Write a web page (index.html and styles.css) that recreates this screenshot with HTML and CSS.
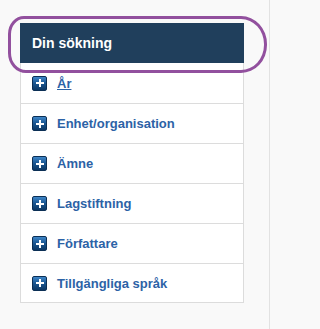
FILE: index.html
```html
<!DOCTYPE html>
<html lang="sv">
<head>
<meta charset="utf-8">
<title>Din sökning</title>
<link rel="stylesheet" href="styles.css">
</head>
<body>
<div class="page">
  <aside class="panel">
    <h2 class="panel-head">Din sökning</h2>
    <ul class="facets">
      <li class="facet"><span class="plus"></span><a class="facet-link active" href="#">År</a></li>
      <li class="facet"><span class="plus"></span><a class="facet-link" href="#">Enhet/organisation</a></li>
      <li class="facet"><span class="plus"></span><a class="facet-link" href="#">Ämne</a></li>
      <li class="facet"><span class="plus"></span><a class="facet-link" href="#">Lagstiftning</a></li>
      <li class="facet"><span class="plus"></span><a class="facet-link" href="#">Författare</a></li>
      <li class="facet"><span class="plus"></span><a class="facet-link" href="#">Tillgängliga språk</a></li>
    </ul>
  </aside>
  <div class="annot"></div>
</div>
</body>
</html>
```

FILE: styles.css
```css
html, body {
  margin: 0;
  padding: 0;
  background: #f9f9f9;
  font-family: "Liberation Sans", Arial, sans-serif;
}
.page {
  position: relative;
  box-sizing: border-box;
  width: 270px;
  min-height: 329px;
  border-right: 1px solid #e2e2e2;
  padding-top: 23px;
  padding-left: 20px;
}
.panel {
  width: 224px;
}
.panel-head {
  margin: 0;
  height: 40px;
  box-sizing: border-box;
  padding-left: 12px;
  display: flex;
  align-items: center;
  background: #203f5c;
  color: #ffffff;
  font-size: 14px;
  font-weight: bold;
}
.facets {
  list-style: none;
  margin: 0;
  padding: 0;
  background: #ffffff;
  border-left: 1px solid #dcdcdc;
  border-right: 1px solid #dcdcdc;
}
.facet {
  height: 40px;
  box-sizing: border-box;
  border-bottom: 1px solid #dcdcdc;
  display: flex;
  align-items: center;
  padding-left: 11px;
  gap: 10px;
}
.facet:first-child {
  height: 41px;
}
.facet:last-child {
  height: 39px;
}
.plus {
  position: relative;
  width: 15px;
  height: 15px;
  box-sizing: border-box;
  border-radius: 2px;
  background: linear-gradient(#3f86c8, #1b5894 45%, #0d3763);
  border: 1px solid #0b2f55;
  flex: none;
}
.plus::before,
.plus::after {
  content: "";
  position: absolute;
  background: #ffffff;
}
.plus::before {
  left: 2.5px;
  top: 5.5px;
  width: 8px;
  height: 2px;
}
.plus::after {
  left: 5.5px;
  top: 2.5px;
  width: 2px;
  height: 8px;
}
.facet-link {
  color: #2c62a6;
  font-size: 13px;
  font-weight: bold;
  text-decoration: none;
}
.facet-link.active {
  text-decoration: underline;
}
.annot {
  position: absolute;
  left: 8px;
  top: 16px;
  width: 259px;
  height: 57px;
  box-sizing: border-box;
  border: 3px solid #92509e;
  border-radius: 16px 26px 26px 18px / 18px 28px 28px 20px;
  pointer-events: none;
}
```
